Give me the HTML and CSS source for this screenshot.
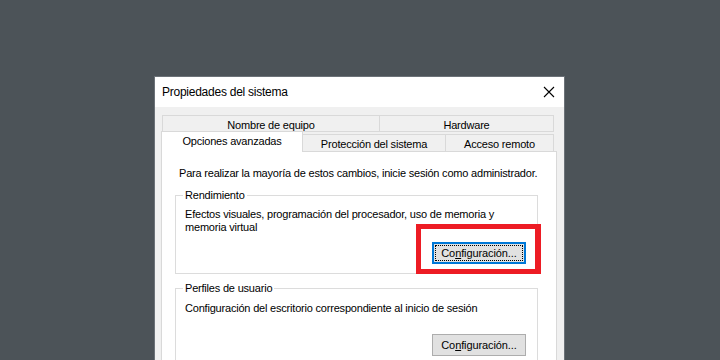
FILE: index.html
```html
<!DOCTYPE html>
<html lang="es">
<head>
    <meta charset="UTF-8">
    <meta name="viewport" content="width=device-width, initial-scale=1.0">
    <title>Propiedades del sistema</title>
    <link rel="stylesheet" href="styles.css">
</head>
<body>
    <div class="window">
        <div class="titlebar">
            <span class="title">Propiedades del sistema</span>
            <svg class="close" width="12" height="12" viewBox="0 0 12 12">
                <path d="M1 1 L11 11 M11 1 L1 11" stroke="#000" stroke-width="1.1" fill="none"/>
            </svg>
        </div>

        <div class="client">
            <!-- back row of tabs -->
            <div class="tabs-back">
                <div class="tab tab-wide">Nombre de equipo</div>
                <div class="tab tab-hw">Hardware</div>
            </div>

            <!-- front row of tabs -->
            <div class="tabs-front">
                <div class="tab tab-active">Opciones avanzadas</div>
                <div class="tab tab-prot">Protección del sistema</div>
                <div class="tab tab-remote">Acceso remoto</div>
            </div>

            <div class="panel">
                <p class="intro">Para realizar la mayoría de estos cambios, inicie sesión como administrador.</p>

                <fieldset class="group group-perf">
                    <legend>Rendimiento</legend>
                    <p class="group-text">Efectos visuales, programación del procesador, uso de memoria y<br>memoria virtual</p>
                    <div class="group-actions">
                        <button class="btn btn-default"><span class="focus">Co<u>n</u>figuración...</span></button>
                    </div>
                </fieldset>

                <fieldset class="group group-profiles">
                    <legend>Perfiles de usuario</legend>
                    <p class="group-text">Configuración del escritorio correspondiente al inicio de sesión</p>
                    <div class="group-actions">
                        <button class="btn">Co<u>n</u>figuración...</button>
                    </div>
                </fieldset>

                <div class="highlight"></div>
            </div>
        </div>
    </div>
</body>
</html>
```

FILE: styles.css
```css
body {
    margin: 0;
    height: 360px;
    overflow: hidden;
    background-color: #4c5358;
    font-family: "Liberation Sans", Arial, sans-serif;
    font-size: 11px;
    letter-spacing: -0.2px;
    color: #000;
    padding: 76px 0 0 154px;
    box-sizing: border-box;
}

.window {
    width: 411px;
    border: 1px solid #6c7278;
    box-sizing: border-box;
    background-color: #f0f0f0;
}

.titlebar {
    height: 30px;
    background-color: #fff;
    display: flex;
    align-items: center;
    justify-content: space-between;
    padding: 0 9px 0 7px;
}

.title {
    font-size: 12px;
    letter-spacing: -0.25px;
}

.close {
    display: block;
}

.client {
    padding: 8px 7px 0 6px;
    height: 300px;
}

/* tabs */
.tab {
    box-sizing: border-box;
    background-color: #f0f0f0;
    border: 1px solid #d9d9d9;
    display: flex;
    align-items: center;
    justify-content: center;
    line-height: 13px;
    white-space: nowrap;
}

.tabs-back {
    display: flex;
    margin-left: 1px;
    height: 17px;
}

.tabs-back .tab {
    height: 17px;
    padding-top: 3px;
}

.tab-wide {
    width: 218px;
}

.tab-hw {
    width: 174px;
    border-left: none;
}

.tabs-front {
    display: flex;
    align-items: flex-end;
    height: 21px;
    margin-top: -1px;
}

.tab-active {
    position: relative;
    z-index: 1;
    width: 142px;
    height: 21px;
    background-color: #fff;
    border-bottom: none;
    padding-bottom: 1px;
}

.tab-prot,
.tab-remote {
    height: 18px;
    border-left: none;
    border-bottom: none;
    padding-top: 1px;
}

.tab-prot {
    width: 143px;
}

.tab-remote {
    width: 108px;
}

/* page */
.panel {
    position: relative;
    margin-top: -1px;
    height: 260px;
    background-color: #fff;
    border: 1px solid #d9d9d9;
    padding: 15px 18px 0 13px;
}

.intro {
    margin: 0;
    padding-left: 4px;
    line-height: 13px;
    white-space: nowrap;
}

.group {
    margin: 9px 0 0 0;
    padding: 0 11px 9px 9px;
    border: 1px solid #dcdcdc;
    min-width: 0;
}

.group legend {
    margin-left: -2px;
    padding: 0 2px;
    line-height: 13px;
}

.group-profiles {
    margin-top: 8px;
    padding-bottom: 12px;
}

.group-text {
    margin: 6px 0 0 0;
    line-height: 13px;
    white-space: nowrap;
}

.group-profiles .group-text {
    margin-top: 7px;
}

.group-actions {
    display: flex;
    justify-content: flex-end;
    margin-top: 8px;
}

.group-profiles .group-actions {
    margin-top: 19px;
}

.btn {
    width: 94px;
    height: 22px;
    box-sizing: border-box;
    padding: 0;
    border: 1px solid #adadad;
    background-color: #e1e1e1;
    font-family: "Liberation Sans", Arial, sans-serif;
    font-size: 11px;
    letter-spacing: -0.1px;
    color: #000;
    display: flex;
    align-items: center;
    justify-content: center;
}

.btn u {
    text-decoration-thickness: 1px;
    text-underline-offset: 1px;
}

.btn-default {
    border: 2px solid #0078d7;
    padding: 1px;
}

.btn-default .focus {
    flex: 1;
    align-self: stretch;
    display: flex;
    align-items: center;
    justify-content: center;
    outline: 1px dotted #000;
    outline-offset: -1px;
}

/* red marker drawn over the screenshot */
.highlight {
    position: absolute;
    left: 254px;
    top: 72px;
    width: 125px;
    height: 50px;
    box-sizing: border-box;
    border: 5px solid #ed1c24;
    border-right-width: 6px;
}
```
